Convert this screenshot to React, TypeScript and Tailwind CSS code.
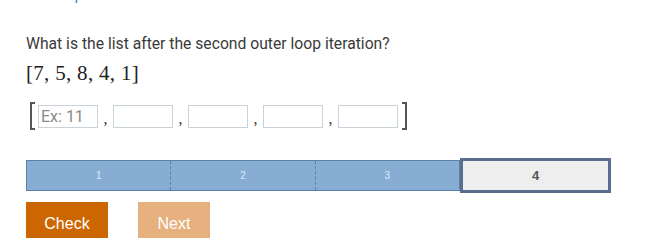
import React from "react";

const sans = { fontFamily: "Roboto, 'Liberation Sans', sans-serif" };

function Bracket({ side }: { side: "left" | "right" }) {
    return (
        <span
            className={`block h-[28px] w-[5px] border-y-2 border-[#555] ${
                side === "left" ? "border-l-2" : "border-r-2"
            }`}
        />
    );
}

function Comma() {
    return (
        <span className="flex h-[28px] w-[15px] items-end justify-center pb-[3px] font-['Liberation_Serif',serif] text-[16px] leading-none text-[#333]">
            ,
        </span>
    );
}

export default function App() {
    const boxes = [0, 1, 2, 3, 4];
    return (
        <div className="h-[238px] w-[645px] overflow-hidden bg-white" style={sans}>
            <div className="h-[3px] overflow-hidden pl-[47px]">
                <div className="-mt-[13px] text-[14px] leading-[16px] text-[#3b78b8]">Jump to level 1</div>
            </div>

            <div className="pl-[26px]">
                <p className="mt-[30px] text-[15.7px] leading-[22px] text-[#3a3a3a]">
                    What is the list after the second outer loop iteration?
                </p>
                <p className="mt-[5px] font-['Liberation_Serif',serif] text-[21px] leading-[26px] tracking-[0.3px] text-[#222]">
                    [7, 5, 8, 4, 1]
                </p>

                <div className="mt-[16px] flex items-center pl-[4px]">
                    <Bracket side="left" />
                    <div className="ml-[3px] flex items-center">
                        {boxes.map((i) => (
                            <React.Fragment key={i}>
                                <input
                                    className="h-[23px] w-[60px] border border-[#c9d2d8] px-[2px] text-[16px] leading-none text-[#333] outline-none placeholder:text-[#8a8a8a]"
                                    placeholder={i === 0 ? "Ex: 11" : ""}
                                    style={sans}
                                />
                                {i < boxes.length - 1 && <Comma />}
                            </React.Fragment>
                        ))}
                    </div>
                    <div className="ml-[4px]">
                        <Bracket side="right" />
                    </div>
                </div>

                <div className="mt-[28px] flex w-[585px] items-center">
                    <div className="flex h-[31px] w-[434px] border border-[#5b82ab] bg-[#88add3]">
                        {["1", "2", "3"].map((n, i) => (
                            <div
                                key={n}
                                className={`flex flex-1 items-center justify-center font-['Liberation_Sans',sans-serif] text-[10px] text-[#dbe9f7] ${
                                    i < 2 ? "border-r border-dashed border-[#5b7fa5]" : ""
                                }`}
                            >
                                {n}
                            </div>
                        ))}
                    </div>
                    <div className="flex h-[35px] flex-1 items-center justify-center border-[3px] border-[#596d8d] bg-[#eeeeee] font-['Liberation_Sans',sans-serif] text-[13px] font-bold text-[#555]">
                        4
                    </div>
                </div>

                <div className="mt-[9px] flex gap-[30px] font-['Liberation_Sans',sans-serif]">
                    <button className="h-[41px] w-[82px] bg-[#cc6600] pt-[2px] text-[16px] text-white">Check</button>
                    <button className="h-[41px] w-[72px] bg-[#e6b17f] pt-[2px] text-[16px] text-white">Next</button>
                </div>
            </div>
        </div>
    );
}
